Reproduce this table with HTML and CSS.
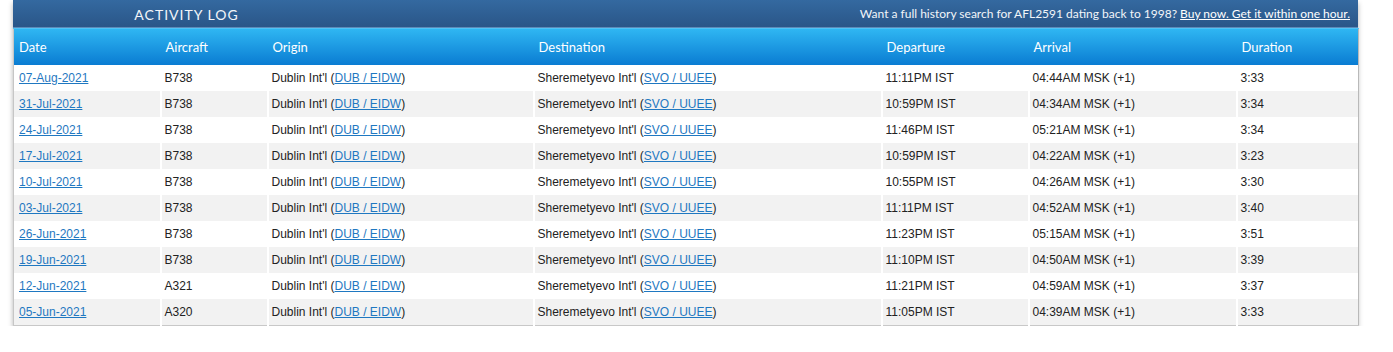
FILE: index.html
```html
<!DOCTYPE html>
<html>
<head>
<meta charset="utf-8">
<link rel="stylesheet" href="styles.css">
</head>
<body>
<div class="log">
  <div class="titlebar">
    <div class="title">ACTIVITY LOG</div>
    <div class="promo">Want a full history search for AFL2591 dating back to 1998? <a href="#">Buy now. Get it within one hour.</a></div>
  </div>
  <table class="grid">
    <colgroup>
      <col class="c1"><col class="c2"><col class="c3"><col class="c4"><col class="c5"><col class="c6"><col class="c7">
    </colgroup>
    <thead>
      <tr><th>Date</th><th>Aircraft</th><th>Origin</th><th>Destination</th><th>Departure</th><th>Arrival</th><th>Duration</th></tr>
    </thead>
    <tbody>
      <tr><td><a href="#">07-Aug-2021</a></td><td>B738</td><td>Dublin Int'l (<a href="#">DUB / EIDW</a>)</td><td>Sheremetyevo Int'l (<a href="#">SVO / UUEE</a>)</td><td>11:11PM IST</td><td>04:44AM MSK (+1)</td><td>3:33</td></tr>
      <tr><td><a href="#">31-Jul-2021</a></td><td>B738</td><td>Dublin Int'l (<a href="#">DUB / EIDW</a>)</td><td>Sheremetyevo Int'l (<a href="#">SVO / UUEE</a>)</td><td>10:59PM IST</td><td>04:34AM MSK (+1)</td><td>3:34</td></tr>
      <tr><td><a href="#">24-Jul-2021</a></td><td>B738</td><td>Dublin Int'l (<a href="#">DUB / EIDW</a>)</td><td>Sheremetyevo Int'l (<a href="#">SVO / UUEE</a>)</td><td>11:46PM IST</td><td>05:21AM MSK (+1)</td><td>3:34</td></tr>
      <tr><td><a href="#">17-Jul-2021</a></td><td>B738</td><td>Dublin Int'l (<a href="#">DUB / EIDW</a>)</td><td>Sheremetyevo Int'l (<a href="#">SVO / UUEE</a>)</td><td>10:59PM IST</td><td>04:22AM MSK (+1)</td><td>3:23</td></tr>
      <tr><td><a href="#">10-Jul-2021</a></td><td>B738</td><td>Dublin Int'l (<a href="#">DUB / EIDW</a>)</td><td>Sheremetyevo Int'l (<a href="#">SVO / UUEE</a>)</td><td>10:55PM IST</td><td>04:26AM MSK (+1)</td><td>3:30</td></tr>
      <tr><td><a href="#">03-Jul-2021</a></td><td>B738</td><td>Dublin Int'l (<a href="#">DUB / EIDW</a>)</td><td>Sheremetyevo Int'l (<a href="#">SVO / UUEE</a>)</td><td>11:11PM IST</td><td>04:52AM MSK (+1)</td><td>3:40</td></tr>
      <tr><td><a href="#">26-Jun-2021</a></td><td>B738</td><td>Dublin Int'l (<a href="#">DUB / EIDW</a>)</td><td>Sheremetyevo Int'l (<a href="#">SVO / UUEE</a>)</td><td>11:23PM IST</td><td>05:15AM MSK (+1)</td><td>3:51</td></tr>
      <tr><td><a href="#">19-Jun-2021</a></td><td>B738</td><td>Dublin Int'l (<a href="#">DUB / EIDW</a>)</td><td>Sheremetyevo Int'l (<a href="#">SVO / UUEE</a>)</td><td>11:10PM IST</td><td>04:50AM MSK (+1)</td><td>3:39</td></tr>
      <tr><td><a href="#">12-Jun-2021</a></td><td>A321</td><td>Dublin Int'l (<a href="#">DUB / EIDW</a>)</td><td>Sheremetyevo Int'l (<a href="#">SVO / UUEE</a>)</td><td>11:21PM IST</td><td>04:59AM MSK (+1)</td><td>3:37</td></tr>
      <tr><td><a href="#">05-Jun-2021</a></td><td>A320</td><td>Dublin Int'l (<a href="#">DUB / EIDW</a>)</td><td>Sheremetyevo Int'l (<a href="#">SVO / UUEE</a>)</td><td>11:05PM IST</td><td>04:39AM MSK (+1)</td><td>3:33</td></tr>
    </tbody>
  </table>
</div>
</body>
</html>
```

FILE: styles.css
```css
html, body {
  margin: 0;
  padding: 0;
  background: #ffffff;
}
body {
  padding: 0 35px 0 13px;
  font-family: "Liberation Sans", Arial, sans-serif;
}
.log {
  width: 1345px;
  box-shadow: 0 3px 5px rgba(0, 0, 0, 0.3);
}
.titlebar {
  display: flex;
  align-items: center;
  height: 27px;
  background: linear-gradient(#3469a0, #2a5688);
  border-bottom: 1px solid #5d8ab8;
  font-family: Lato, "Open Sans", sans-serif;
  color: #f2f5f9;
}
.title {
  width: 347px;
  text-align: center;
  font-size: 14px;
  letter-spacing: 1px;
  padding-top: 1px;
}
.promo {
  flex: 1;
  text-align: right;
  font-size: 12px;
  padding-right: 8px;
  padding-bottom: 1px;
}
.promo a {
  color: #ffffff;
  text-decoration: underline;
}
.grid {
  width: 1345px;
  border-collapse: collapse;
  table-layout: fixed;
  border-left: 1px solid #c6c6c6;
  border-right: 1px solid #b9b9b9;
  border-bottom: 1px solid #c8c8c8;
}
.c1 { width: 147px; }
.c2 { width: 107px; }
.c3 { width: 266px; }
.c4 { width: 348px; }
.c5 { width: 147px; }
.c6 { width: 208px; }
.c7 { width: 122px; }
.grid thead tr {
  height: 36px;
  background: linear-gradient(#2fb6f2, #0a7cd2);
}
.grid th {
  font-family: Lato, "Open Sans", sans-serif;
  font-weight: normal;
  font-size: 13px;
  color: #ffffff;
  text-align: left;
  padding: 1px 5px 0 5px;
  border-top: 1px solid #4ec3f5;
}
.grid td {
  height: 26px;
  padding: 0 5px 0 3px;
  font-size: 12px;
  color: #222222;
  white-space: nowrap;
  border-left: 2px solid #ffffff;
}
.grid td:first-child {
  border-left: none;
  padding-left: 5px;
}
.grid tbody tr {
  height: 26px;
}
.grid tbody tr:nth-child(even) {
  background: #f2f2f2;
}
.grid a {
  color: #1f78c1;
  text-decoration: underline;
}
```
